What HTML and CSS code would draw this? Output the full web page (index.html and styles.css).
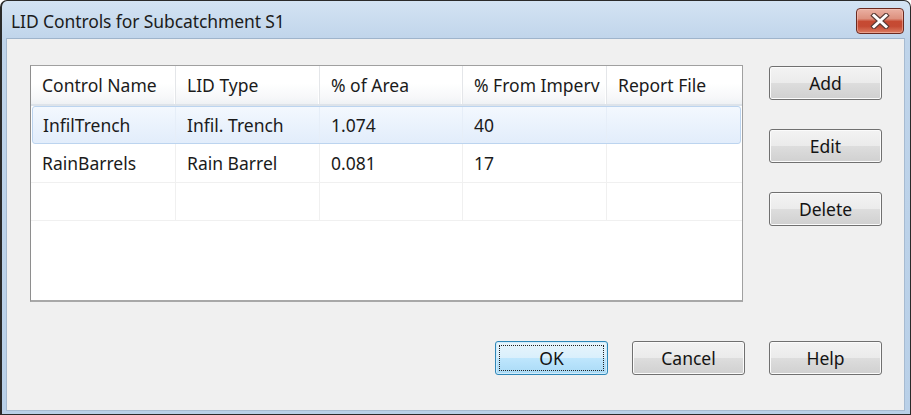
FILE: index.html
```html
<!DOCTYPE html>
<html>
<head>
<meta charset="utf-8">
<link rel="stylesheet" href="styles.css">
</head>
<body>
<div class="window">
  <div class="titlebar">
    <span class="title">LID Controls for Subcatchment S1</span>
    <div class="close">
      <svg width="20" height="16" viewBox="0 0 20 16">
        <path d="M4 2.5 L16 13.5 M16 2.5 L4 13.5" stroke="#5a3b36" stroke-width="5.2" stroke-linecap="square" fill="none"/>
        <path d="M4 2.5 L16 13.5 M16 2.5 L4 13.5" stroke="#ffffff" stroke-width="3" stroke-linecap="square" fill="none"/>
      </svg>
    </div>
  </div>
  <div class="client">
    <div class="top">
      <div class="list">
        <div class="row header">
          <div class="cell">Control Name</div>
          <div class="cell">LID Type</div>
          <div class="cell">% of Area</div>
          <div class="cell">% From Imperv</div>
          <div class="cell">Report File</div>
        </div>
        <div class="row selected">
          <div class="cell">InfilTrench</div>
          <div class="cell">Infil. Trench</div>
          <div class="cell">1.074</div>
          <div class="cell">40</div>
          <div class="cell"></div>
        </div>
        <div class="row">
          <div class="cell">RainBarrels</div>
          <div class="cell">Rain Barrel</div>
          <div class="cell">0.081</div>
          <div class="cell">17</div>
          <div class="cell"></div>
        </div>
        <div class="row">
          <div class="cell"></div>
          <div class="cell"></div>
          <div class="cell"></div>
          <div class="cell"></div>
          <div class="cell"></div>
        </div>
      </div>
      <div class="side">
        <div class="btn">Add</div>
        <div class="btn">Edit</div>
        <div class="btn">Delete</div>
      </div>
    </div>
    <div class="bottom">
      <div class="btn default"><span class="focus">OK</span></div>
      <div class="btn">Cancel</div>
      <div class="btn">Help</div>
    </div>
  </div>
</div>
</body>
</html>
```
FILE: styles.css
```css
html, body {
  margin: 0;
  padding: 0;
  width: 911px;
  height: 415px;
  overflow: hidden;
  background: #ffffff;
}

.window {
  box-sizing: border-box;
  width: 911px;
  height: 415px;
  border: 1px solid #2a2a2a;
  border-left-width: 2px;
  border-radius: 7px 7px 0 0;
  background: linear-gradient(#d3e3f3, #bfd4ea 40px, #b9d0e8);
  padding: 0 5px 3px 4px;
  display: flex;
  flex-direction: column;
  font-family: "Noto Sans", "Open Sans", sans-serif;
  font-size: 17.5px;
  color: #1a1a1a;
}

.titlebar {
  height: 37px;
  display: flex;
  align-items: center;
  justify-content: space-between;
  flex: none;
}

.title {
  margin-left: 5px;
  margin-top: 2px;
  font-size: 17.5px;
  color: #1c1c1c;
  letter-spacing: -0.1px;
}

.close {
  width: 46px;
  height: 24px;
  margin-right: 1px;
  margin-top: 3px;
  border: 1px solid #6b2a20;
  border-radius: 4px;
  background: linear-gradient(#eab0a2 0%, #dd917f 40%, #c64a32 52%, #c54a33 72%, #dc7d62 100%);
  box-shadow: inset 0 0 0 1px rgba(255, 210, 200, 0.45);
  display: flex;
  align-items: center;
  justify-content: center;
}

.client {
  flex: 1;
  background: #f0f0f0;
  border: 1px solid #a7bbd1;
  border-top-color: #9fb4cb;
  padding: 26px 22px 0 23px;
  display: flex;
  flex-direction: column;
}

.top {
  display: flex;
  gap: 26px;
  align-items: flex-start;
}

.list {
  box-sizing: border-box;
  width: 713px;
  height: 237px;
  background: #ffffff;
  border: 1px solid #a0a0a0;
  border-left-color: #8e8e8e;
  border-bottom: 2px solid #a8a8a8;
}

.row {
  display: grid;
  grid-template-columns: 145px 144px 143px 144px 1fr;
  height: 37.5px;
  border-bottom: 1px solid #f0f0f0;
}

.cell {
  padding-left: 11px;
  display: flex;
  align-items: center;
  white-space: nowrap;
  overflow: hidden;
  border-right: 1px solid #f0f0f0;
  color: #1b1b1b;
}

.cell:first-child {
  padding-left: 11px;
}

.cell:last-child {
  border-right: none;
}

.header {
  height: 38px;
  background: linear-gradient(#ffffff 0%, #ffffff 45%, #f6f7f9 85%, #eef1f4 100%);
  border-bottom: 2px solid #dde3ea;
}

.header .cell {
  border-right: 1px solid #e4e6e9;
  box-shadow: inset -1px 0 0 #ffffff;
  padding-top: 0;
}

.header .cell:last-child {
  border-right: none;
  box-shadow: none;
}

.row.selected {
  height: 36px;
  margin: 0 1px 0 1px;
  border: 1px solid #bcd4ef;
  border-radius: 3px;
  background: linear-gradient(#f3f8fe, #e2edfb);
  grid-template-columns: 143px 144px 143px 144px 1fr;
}

.row.selected .cell {
  border-right-color: #e6eef8;
}

.row.selected .cell:first-child {
  padding-left: 10px;
}

.side {
  width: 113px;
  padding-top: 1px;
  display: flex;
  flex-direction: column;
  gap: 29px;
}

.btn {
  box-sizing: border-box;
  width: 113px;
  height: 34px;
  border: 1px solid #707070;
  border-radius: 3px;
  background: linear-gradient(#f3f3f3 0%, #ebebeb 50%, #dddddd 51%, #d0d0d0 100%);
  box-shadow: inset 0 0 0 1px #fbfbfb;
  display: flex;
  align-items: center;
  justify-content: center;
  color: #141414;
}

.bottom {
  margin-top: 39px;
  display: flex;
  justify-content: flex-end;
  gap: 24px;
}

.btn.default {
  border-color: #2f87b8;
  background: linear-gradient(#e8f5fc 0%, #d9effc 50%, #bee6fd 51%, #a9daf6 100%);
  box-shadow: inset 0 0 0 1px #d0ecfb;
  padding: 3px;
}

.focus {
  box-sizing: border-box;
  width: 100%;
  height: 100%;
  border: 1px dotted #222222;
  display: flex;
  align-items: center;
  justify-content: center;
}
```
